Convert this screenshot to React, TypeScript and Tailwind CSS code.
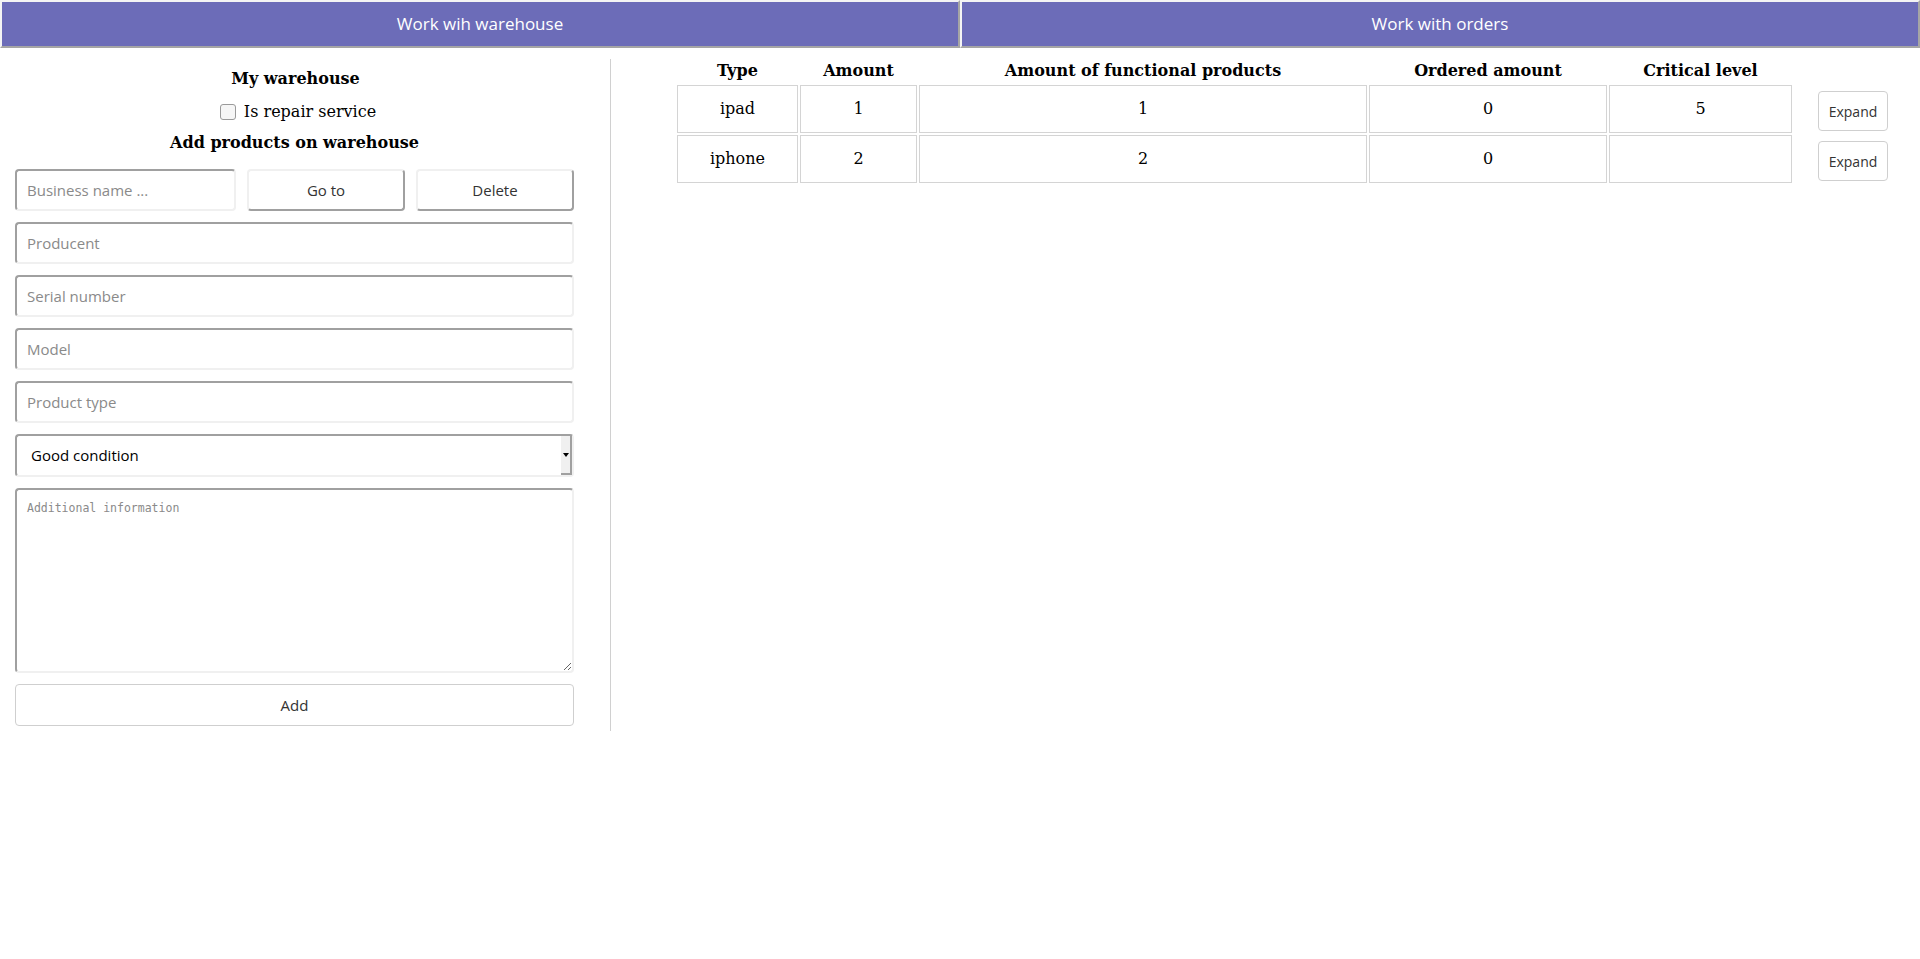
import { useState } from 'react';

const rows = [
    { type: 'ipad', amount: 1, functional: 1, ordered: 0, critical: '5' },
    { type: 'iphone', amount: 2, functional: 2, ordered: 0, critical: '' },
];

const sans = "font-['Open_Sans','Noto_Sans',sans-serif]";
const serif = "font-['DejaVu_Serif','Liberation_Serif',serif]";

const inputClass =
    'h-[42px] rounded-[4px] border-2 border-t-[#a0a0a0] border-l-[#a0a0a0] border-b-[#f0f0f0] border-r-[#f0f0f0] bg-white px-[10px] text-[15px] text-black placeholder:text-[#8a8a8a] outline-none';

const raisedButton =
    'h-[42px] rounded-[4px] border-2 border-t-[#f0f0f0] border-l-[#f0f0f0] border-b-[#a0a0a0] border-r-[#a0a0a0] bg-white text-[15px] text-[#333]';

export default function App() {
    const [isRepair, setIsRepair] = useState(false);

    return (
        <div className="min-h-screen bg-white">
            {/* Top navigation */}
            <div className={`flex ${sans}`}>
                <button className="w-1/2 h-[48px] border-2 border-t-[#f4f4f4] border-l-[#f4f4f4] border-b-[#a5a5a5] border-r-[#a5a5a5] bg-[#6c6cb8] text-white text-[17px]">
                    Work wih warehouse
                </button>
                <button className="w-1/2 h-[48px] border-2 border-t-[#f4f4f4] border-l-[#f4f4f4] border-b-[#a5a5a5] border-r-[#a5a5a5] bg-[#6c6cb8] text-white text-[17px]">
                    Work with orders
                </button>
            </div>

            <div className="flex pt-[11px]">
                {/* Warehouse form */}
                <div className="w-[611px] h-[672px] border-r border-[#d0d0d0] pl-[15px] pr-[36px] pt-[10px]">
                    <div className={`${serif} text-black text-[16px] leading-[20px] text-center`}>
                        <div className="font-bold pl-[2px]">My warehouse</div>
                        <label className="mt-[13px] pl-[7px] flex items-center justify-center gap-[8px]">
                            <input
                                type="checkbox"
                                checked={isRepair}
                                onChange={(e) => setIsRepair(e.target.checked)}
                                className="appearance-none w-[16px] h-[16px] rounded-[3px] border border-[#9a9a9a] bg-[#f6f6f6] checked:bg-[#6c6cb8]"
                            />
                            <span>Is repair service</span>
                        </label>
                        <div className="mt-[11px] font-bold">Add products on warehouse</div>
                    </div>

                    <div className={`mt-[16px] flex flex-col gap-[11px] ${sans}`}>
                        <div className="flex gap-[11px]">
                            <input placeholder="Business name ..." className={`${inputClass} w-[221px]`} />
                            <button className={`${raisedButton} w-[158px]`}>Go to</button>
                            <button className={`${raisedButton} w-[158px]`}>Delete</button>
                        </div>
                        <input placeholder="Producent" className={`${inputClass} w-full`} />
                        <input placeholder="Serial number" className={`${inputClass} w-full`} />
                        <input placeholder="Model" className={`${inputClass} w-full`} />
                        <input placeholder="Product type" className={`${inputClass} w-full`} />
                        <div className="relative">
                            <select className="appearance-none w-full h-[43px] rounded-[4px] border-2 border-t-[#a0a0a0] border-l-[#a0a0a0] border-b-[#f0f0f0] border-r-[#f0f0f0] bg-white pl-[14px] text-[15px] text-black outline-none">
                                <option>Good condition</option>
                                <option>Damaged</option>
                                <option>Broken</option>
                            </select>
                            {/* native-looking arrow box */}
                            <div className="pointer-events-none absolute right-[2px] top-[2px] bottom-[2px] w-[11px] bg-[#f0f0f0] border-r-2 border-b-2 border-[#a0a0a0] flex items-center justify-center">
                                <div className="w-0 h-0 border-l-[3px] border-r-[3px] border-t-[4px] border-l-transparent border-r-transparent border-t-black" />
                            </div>
                        </div>
                        <textarea
                            placeholder="Additional information"
                            className="w-full h-[185px] rounded-[4px] border-2 border-t-[#a0a0a0] border-l-[#a0a0a0] border-b-[#f0f0f0] border-r-[#f0f0f0] bg-white px-[10px] pt-[10px] font-['DejaVu_Sans_Mono','Liberation_Mono',monospace] text-[11.5px] placeholder:text-[#8a8a8a] outline-none"
                        />
                        <button className="w-full h-[42px] rounded-[4px] border border-[#cfcfcf] bg-white text-[15px] text-[#333]">
                            Add
                        </button>
                    </div>
                </div>

                {/* Products table */}
                <div className="flex-1 pl-[64px] -mt-[2px]">
                    <table className={`border-separate border-spacing-[2px] ${serif} text-[16px] text-black`}>
                        <thead>
                            <tr className="h-[22px]">
                                <th className="w-[121px] align-bottom font-bold">Type</th>
                                <th className="w-[117px] align-bottom font-bold">Amount</th>
                                <th className="w-[448px] align-bottom font-bold">Amount of functional products</th>
                                <th className="w-[238px] align-bottom font-bold">Ordered amount</th>
                                <th className="w-[183px] align-bottom font-bold">Critical level</th>
                                <th className="w-[96px]"></th>
                            </tr>
                        </thead>
                        <tbody>
                            {rows.map((row) => (
                                <tr key={row.type} className="h-[48px]">
                                    <td className="border border-[#d4d4d4] text-center">{row.type}</td>
                                    <td className="border border-[#d4d4d4] text-center">{row.amount}</td>
                                    <td className="border border-[#d4d4d4] text-center">{row.functional}</td>
                                    <td className="border border-[#d4d4d4] text-center">{row.ordered}</td>
                                    <td className="border border-[#d4d4d4] text-center">{row.critical}</td>
                                    <td className="pl-[24px] pb-[2px] align-bottom">
                                        <button className={`${sans} w-[70px] h-[40px] rounded-[4px] border border-[#cfcfcf] bg-white text-[14px] text-[#333]`}>
                                            Expand
                                        </button>
                                    </td>
                                </tr>
                            ))}
                        </tbody>
                    </table>
                </div>
            </div>
        </div>
    );
}
